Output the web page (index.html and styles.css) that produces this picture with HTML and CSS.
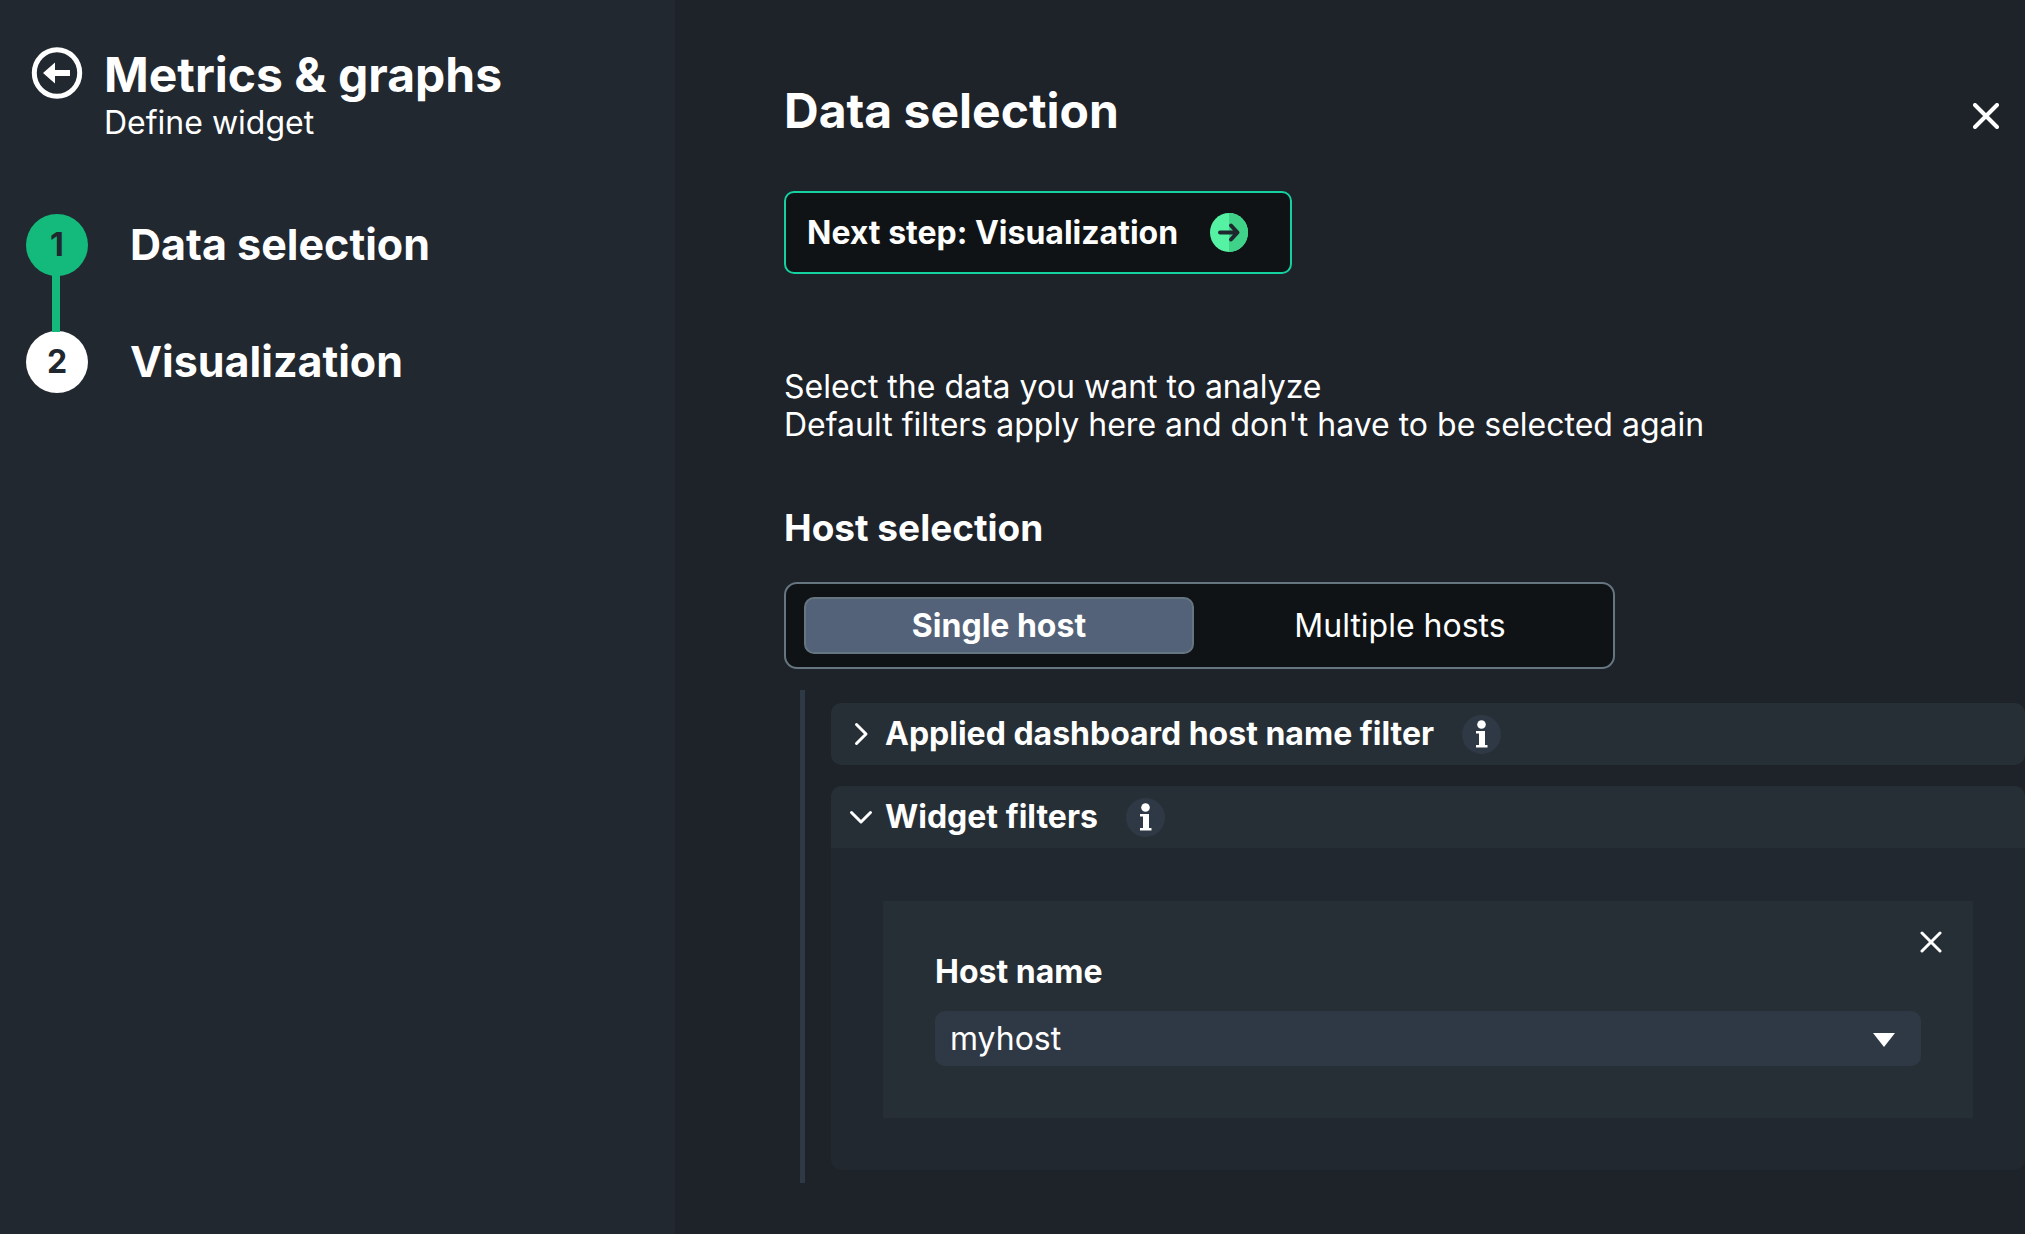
FILE: index.html
```html
<!DOCTYPE html>
<html lang="en">
<head>
<meta charset="utf-8">
<meta name="viewport" content="width=device-width, initial-scale=1">
<title>Metrics &amp; graphs – Data selection</title>
<link rel="stylesheet" href="styles.css">
</head>
<body>
<div class="wizard">
  <aside class="sidebar">
    <header class="sidebar-header">
      <button class="icon-button" type="button" aria-label="Back">
        <svg width="52" height="54" viewBox="0 0 52 54"><ellipse cx="26" cy="27" rx="22.7" ry="23.3" fill="none" stroke="currentColor" stroke-width="5"/><path d="M12 27 24 16.500V24H39V30H24V37.500Z" fill="currentColor"/></svg>
      </button>
      <div>
        <h1 class="title">Metrics &amp; graphs</h1>
        <p class="subtitle">Define widget</p>
      </div>
    </header>
    <ol class="steps">
      <li class="step step-active"><span class="step-number">1</span><span class="step-label">Data selection</span></li>
      <li class="step"><span class="step-number">2</span><span class="step-label">Visualization</span></li>
    </ol>
  </aside>

  <main class="content">
    <header class="content-header">
      <h2 class="title">Data selection</h2>
      <button class="icon-button" type="button" aria-label="Close">
        <svg width="26" height="26" viewBox="0 0 26 26"><path d="M2 2 24 24M24 2 2 24" stroke="currentColor" stroke-width="4" stroke-linecap="round"/></svg>
      </button>
    </header>

    <button class="next" type="button">
      Next step: Visualization
      <svg width="38" height="39" viewBox="0 0 38 39"><ellipse cx="19" cy="19.500" rx="19" ry="19.500" fill="#55f2a4"/><path d="M19 0A19 19.500 0 0 1 19 39Z" fill="#41d28a"/><path d="M10 19.500H27M21 12.500 27.500 19.500 21 26.500" fill="none" stroke="#1e262e" stroke-width="4" stroke-linecap="round" stroke-linejoin="round"/></svg>
    </button>

    <p class="intro">Select the data you want to analyze<br>Default filters apply here and don't have to be selected again</p>

    <h3 class="section-title">Host selection</h3>
    <div class="toggle" role="group" aria-label="Host selection">
      <button class="toggle-option toggle-selected" type="button" aria-pressed="true">Single host</button>
      <button class="toggle-option" type="button" aria-pressed="false">Multiple hosts</button>
    </div>

    <div class="filters">
      <section class="panel">
        <div class="panel-header">
          <button class="panel-toggle" type="button" aria-expanded="false">
            <svg width="24" height="24" viewBox="0 0 24 24"><path d="M7.500 2.500 17 12 7.500 21.500" fill="none" stroke="currentColor" stroke-width="3" stroke-linecap="round" stroke-linejoin="round"/></svg>
            Applied dashboard host name filter
          </button>
          <button class="icon-button" type="button" aria-label="About the dashboard filter">
            <svg width="39" height="39" viewBox="0 0 39 39"><circle cx="19.500" cy="19.500" r="19.500" fill="#2f3945"/><circle cx="19.500" cy="9.500" r="4.300" fill="#fff"/><path d="M14 16H23V30H25.500V32.500H14V30H17V18.500H14Z" fill="#fff"/></svg>
          </button>
        </div>
      </section>

      <section class="panel">
        <div class="panel-header">
          <button class="panel-toggle" type="button" aria-expanded="true">
            <svg width="24" height="24" viewBox="0 0 24 24"><path d="M2.500 7.500 12 17 21.500 7.500" fill="none" stroke="currentColor" stroke-width="3" stroke-linecap="round" stroke-linejoin="round"/></svg>
            Widget filters
          </button>
          <button class="icon-button" type="button" aria-label="About widget filters">
            <svg width="39" height="39" viewBox="0 0 39 39"><circle cx="19.500" cy="19.500" r="19.500" fill="#2f3945"/><circle cx="19.500" cy="9.500" r="4.300" fill="#fff"/><path d="M14 16H23V30H25.500V32.500H14V30H17V18.500H14Z" fill="#fff"/></svg>
          </button>
        </div>
        <div class="panel-body">
          <div class="filter-card">
            <button class="icon-button remove" type="button" aria-label="Remove filter">
              <svg width="22" height="22" viewBox="0 0 22 22"><path d="M2 2 20 20M20 2 2 20" stroke="currentColor" stroke-width="3" stroke-linecap="round"/></svg>
            </button>
            <label class="field-label" for="host">Host name</label>
            <div class="select-wrap">
              <select class="select" id="host"><option>myhost</option></select>
              <svg class="select-arrow" width="22" height="14" viewBox="0 0 22 14"><path d="M0 0H22L11 14Z" fill="currentColor"/></svg>
            </div>
          </div>
        </div>
      </section>
    </div>
  </main>
</div>
</body>
</html>
```
FILE: styles.css
```css
* {
  box-sizing: border-box;
  margin: 0;
  padding: 0;
}

body {
  background: #1e2229;
  color: #fff;
  font: 32px/38px Inter, "Liberation Sans", sans-serif;
}

button,
select {
  color: inherit;
  font: inherit;
  border: 0;
  background: none;
  cursor: pointer;
}

svg {
  display: block;
  flex: none;
}

.wizard {
  display: grid;
  grid-template-columns: minmax(0, 1fr) minmax(0, 2fr);
  min-height: 100vh;
}

.icon-button {
  flex: none;
}

/* Sidebar */

.sidebar {
  padding: 46px 26px;
  background: #21282f;
}

.sidebar-header {
  display: flex;
  align-items: flex-start;
  gap: 21px;
  padding-left: 5px;
}

.title {
  font-size: 48px;
  line-height: 58px;
  font-weight: 700;
}

.steps {
  margin-top: 72px;
  list-style: none;
}

.step {
  position: relative;
  display: flex;
  align-items: center;
  gap: 42px;
}

.step + .step {
  margin-top: 55px;
}

.step + .step::before {
  content: "";
  position: absolute;
  left: 26px;
  bottom: 61px;
  width: 8px;
  height: 58px;
  background: #13ba7b;
}

.step-number {
  display: grid;
  place-items: center;
  width: 62px;
  height: 62px;
  border-radius: 50%;
  background: #fff;
  color: #21272e;
  font-weight: 700;
}

.step-active .step-number {
  background: #13ba7b;
}

.step-label {
  padding-bottom: 2px;
  font-size: 43px;
  line-height: 52px;
  font-weight: 700;
}

/* Content */

.content {
  padding: 82px 0 51px 109px;
}

.content-header {
  display: flex;
  align-items: flex-end;
  justify-content: space-between;
  padding-right: 26px;
}

.content-header .icon-button {
  margin-bottom: 11px;
}

.next {
  display: flex;
  align-items: center;
  gap: 32px;
  height: 83px;
  margin-top: 51px;
  padding: 0 42px 0 21px;
  border: 2px solid #15d1a0;
  border-radius: 10px;
  background: #0f1316;
  font-weight: 700;
}

.intro {
  margin-top: 94px;
}

.section-title {
  margin-top: 61px;
  font-size: 37px;
  line-height: 46px;
  font-weight: 700;
}

.toggle {
  display: flex;
  gap: 11px;
  width: fit-content;
  margin-top: 31px;
  padding: 13px 18px;
  border: 2px solid #657681;
  border-radius: 13px;
  background: #0f1316;
}

.toggle-option {
  width: 390px;
  height: 57px;
  border: 2px solid transparent;
  border-radius: 10px;
}

.toggle-selected {
  border-color: #657681;
  background: #546279;
  font-weight: 700;
}

.filters {
  display: grid;
  gap: 21px;
  margin: 21px 0 0 16px;
  padding: 13px 0 13px 26px;
  border-left: 5px solid #2f3945;
}

.panel {
  overflow: hidden;
  border-radius: 10px;
  background: #21282f;
}

.panel-header {
  display: flex;
  align-items: center;
  gap: 28px;
  height: 62px;
  padding: 0 18px;
  background: #272f36;
}

.panel-toggle {
  display: flex;
  align-items: center;
  gap: 12px;
  font-weight: 700;
}

.panel-body {
  padding: 53px 52px 52px;
}

.filter-card {
  position: relative;
  padding: 52px;
  background: #272f36;
}

.remove {
  position: absolute;
  top: 30px;
  right: 31px;
}

.field-label {
  display: block;
  font-weight: 700;
}

.select-wrap {
  position: relative;
  margin-top: 20px;
}

.select {
  display: block;
  width: 100%;
  height: 55px;
  padding: 0 15px;
  border-radius: 10px;
  background: #2f3945;
  appearance: none;
}

.select-arrow {
  position: absolute;
  top: 22px;
  right: 26px;
  pointer-events: none;
}
```
